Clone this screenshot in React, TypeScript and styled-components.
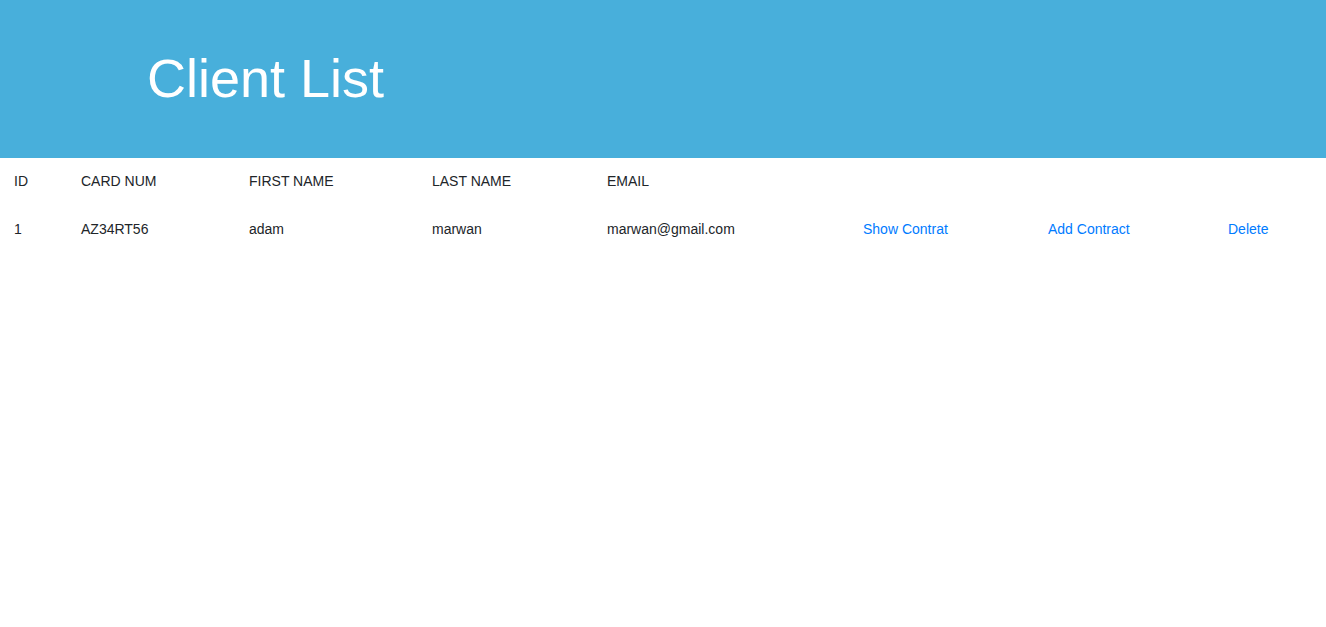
import React from "react";
import styled, { createGlobalStyle } from "styled-components";

const GlobalStyle = createGlobalStyle`
  body {
    margin: 0;
    background: #fff;
    font-family: "Liberation Sans", Arial, sans-serif;
    color: #212529;
  }
`;

const Header = styled.header`
  height: 158px;
  background: #48afdb;
  display: flex;
  align-items: center;
  padding-left: 147px;
  box-sizing: border-box;
`;

const Title = styled.h1`
  margin: 0;
  font-size: 54px;
  font-weight: 400;
  color: #fff;
  padding-bottom: 2px;
`;

const Table = styled.table`
  width: 100%;
  border-collapse: collapse;
  table-layout: fixed;
  font-size: 14px;
`;

const Th = styled.th<{ $w: number }>`
  box-sizing: border-box;
  width: ${(p) => p.$w}px;
  height: 47px;
  padding: 0 0 2px 14px;
  text-align: left;
  font-weight: 400;
  color: #212529;
`;

const Td = styled.td`
  height: 47px;
  padding: 0 0 4px 14px;
  color: #212529;
`;

const Action = styled.a`
  color: #007bff;
  text-decoration: none;
  cursor: pointer;
`;

const columns = [
  { label: "ID", w: 67 },
  { label: "CARD NUM", w: 168 },
  { label: "FIRST NAME", w: 183 },
  { label: "LAST NAME", w: 175 },
  { label: "EMAIL", w: 256 },
  { label: "", w: 185 },
  { label: "", w: 180 },
  { label: "", w: 112 },
];

const clients = [
  { id: 1, card: "AZ34RT56", first: "adam", last: "marwan", email: "marwan@gmail.com" },
];

const App = () => {
  return (
    <>
      <GlobalStyle />
      <Header>
        <Title>Client List</Title>
      </Header>
      <Table>
        <thead>
          <tr>
            {columns.map((c, i) => (
              <Th key={i} $w={c.w}>
                {c.label}
              </Th>
            ))}
          </tr>
        </thead>
        <tbody>
          {clients.map((c) => (
            <tr key={c.id}>
              <Td>{c.id}</Td>
              <Td>{c.card}</Td>
              <Td>{c.first}</Td>
              <Td>{c.last}</Td>
              <Td>{c.email}</Td>
              <Td>
                <Action>Show Contrat</Action>
              </Td>
              <Td>
                <Action>Add Contract</Action>
              </Td>
              <Td>
                <Action>Delete</Action>
              </Td>
            </tr>
          ))}
        </tbody>
      </Table>
    </>
  );
};

export default App;
